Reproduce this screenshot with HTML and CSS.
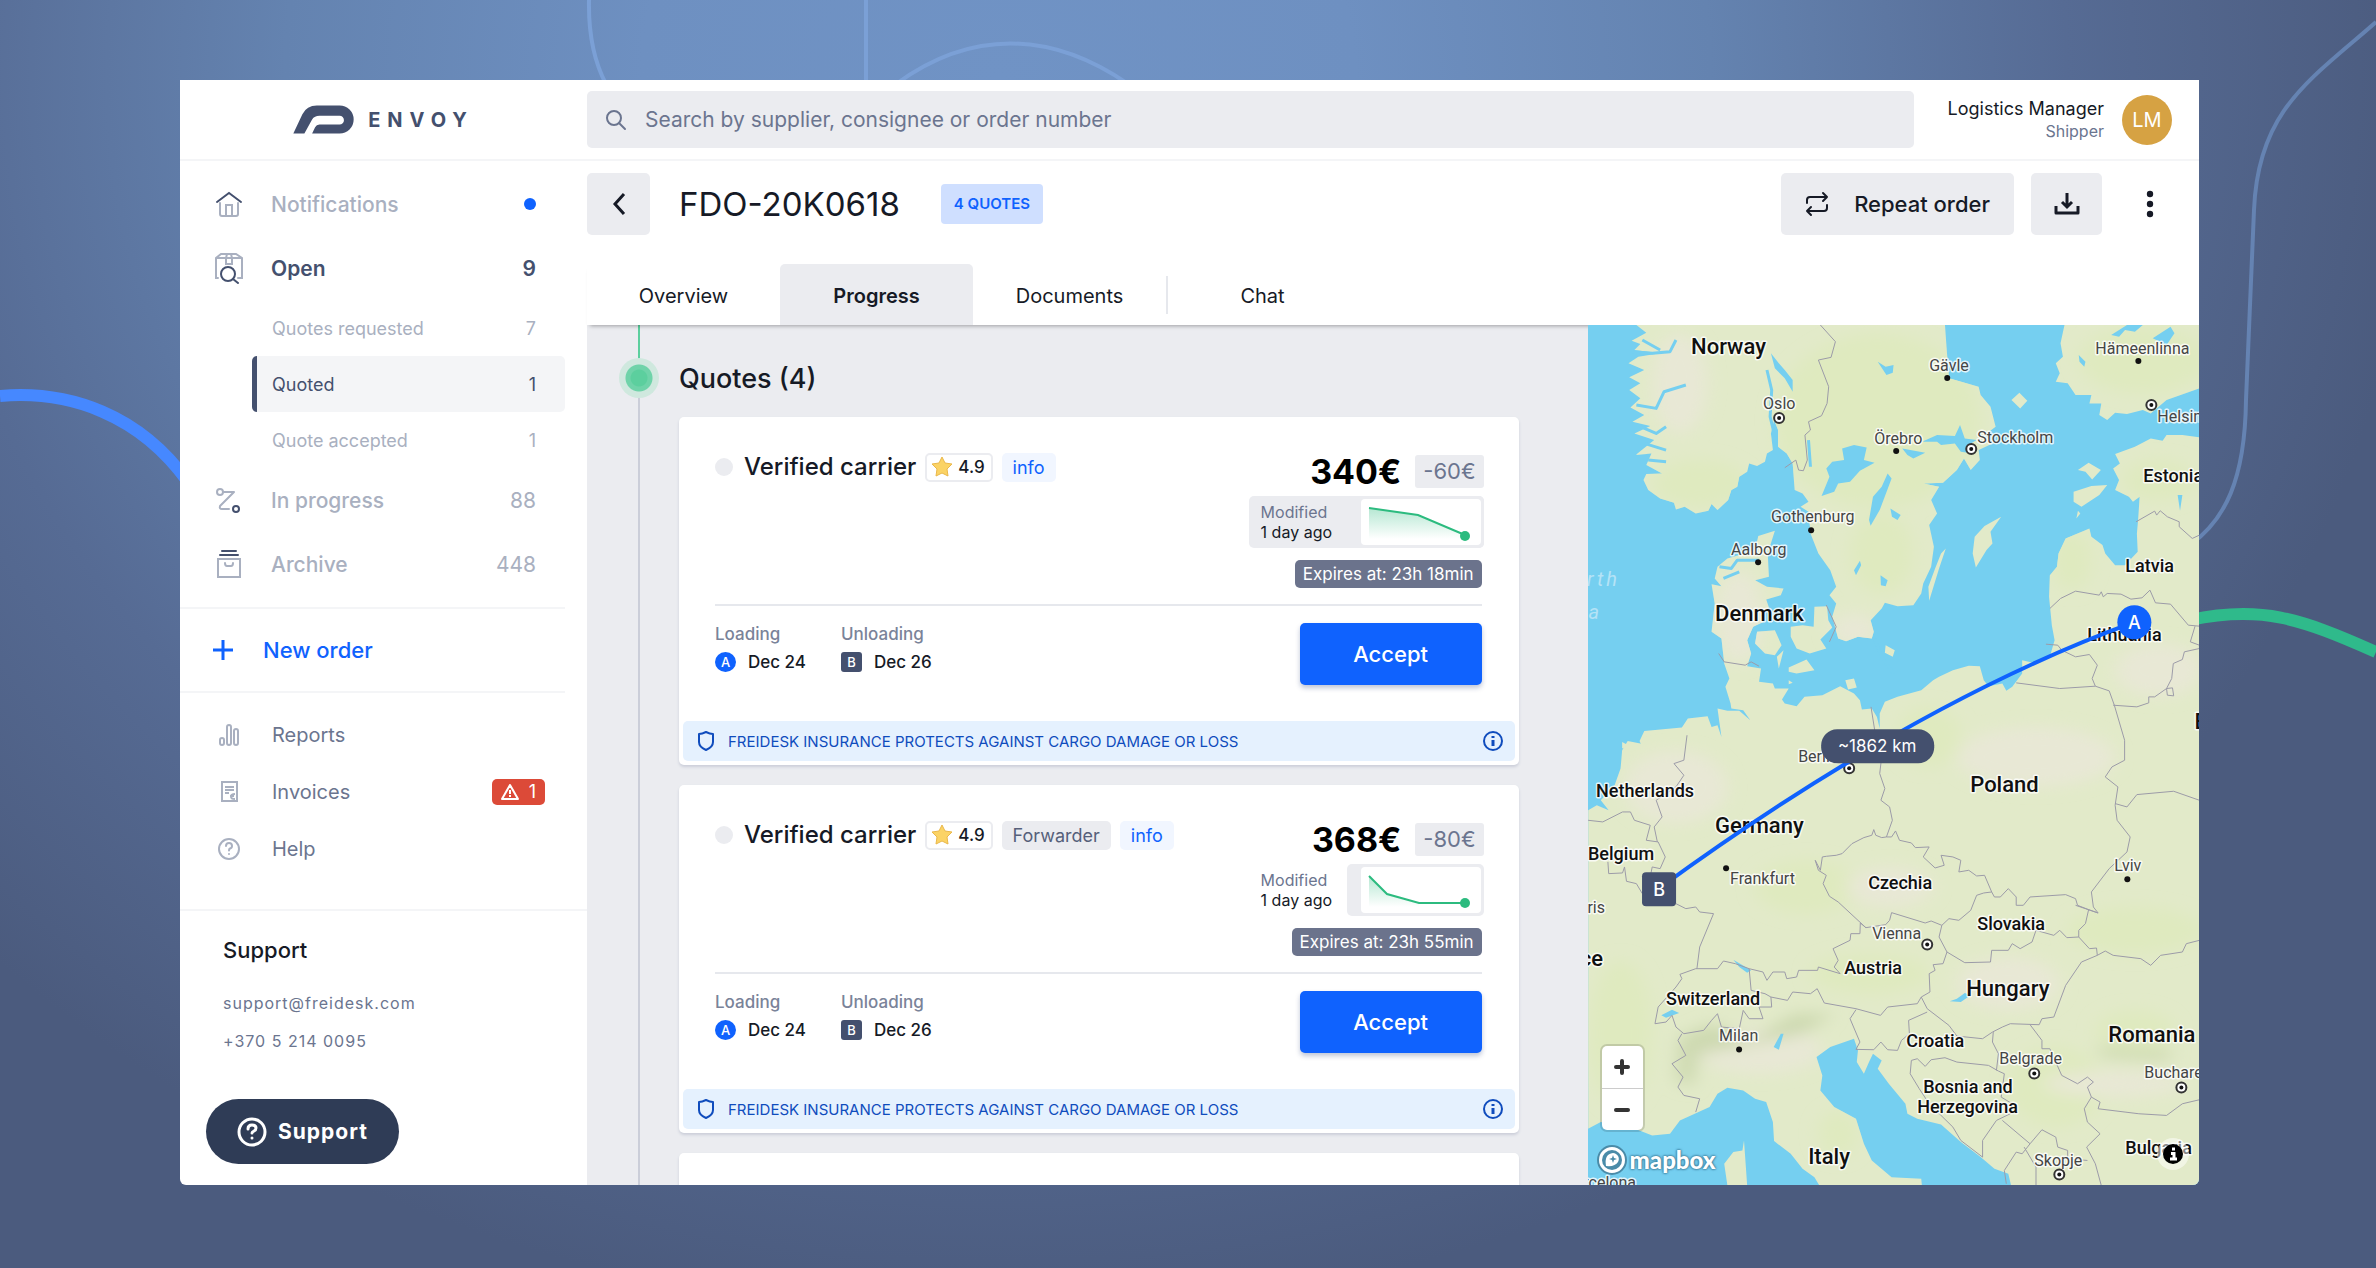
FILE: index.html
```html
<!DOCTYPE html>
<html lang="en">
<head>
<meta charset="utf-8">
<title>Envoy – FDO-20K0618</title>
<meta name="viewport" content="width=device-width, initial-scale=1">
<link rel="stylesheet" href="styles.css">
</head>
<body>
<svg class="backdrop" viewBox="0 0 2376 1268" preserveAspectRatio="xMidYMid slice" fill="none" aria-hidden="true">
  <g stroke="#7ba0d6" stroke-width="4">
    <path d="M589 0Q588 50 606 84M866 0V84M896 84C970 30 1050 30 1128 84"/>
    <path stroke="#6583b2" d="M2376 22C2310 80 2258 110 2254 210L2246 400C2245 480 2225 520 2190 545"/>
  </g>
  <path stroke="#4688ff" stroke-width="12" d="M0 396C70 390 140 415 188 482"/>
  <path stroke="#2fba8b" stroke-width="12" d="M2190 620C2260 605 2300 618 2376 652"/>
</svg>

<div class="app">
  <header class="topbar">
    <a class="brand" href="#">
      <svg width="61" height="29" viewBox="376 103 182 86" aria-hidden="true"><path fill="#44506e" d="M377 188L404 130Q417 104 447 104H515A42 42 0 0 1 515 188H433L442 169Q446 161 455 161H515A13 13 0 0 0 515 135H455Q440 135 433 146L410 188Z"/></svg>
      <span>ENVOY</span>
    </a>
    <label class="search">
      <svg width="22" height="22" viewBox="0 0 22 22" fill="none" stroke="#6b758f" stroke-width="2" stroke-linecap="round" aria-hidden="true"><circle cx="9" cy="9" r="7"/><path d="M14 14l6 6"/></svg>
      <input type="search" placeholder="Search by supplier, consignee or order number" aria-label="Search">
    </label>
    <div class="user">
      <div class="who"><span>Logistics Manager</span><small>Shipper</small></div>
      <div class="avatar">LM</div>
    </div>
  </header>

  <aside class="sidebar">
    <nav class="nav">
      <a class="item" href="#">
        <svg width="28" height="28" viewBox="0 0 28 28" fill="none" stroke="#a9b0c0" stroke-width="2" stroke-linecap="round" aria-hidden="true"><path stroke="#44506e" d="M2 12L14 3l12 9"/><path d="M5 13v11q0 2 2 2h14q2 0 2-2V13M11 26V15h6v11"/></svg>
        <span>Notifications</span><i class="dot"></i></a>
      <a class="item open" href="#">
        <svg width="28" height="32" viewBox="0 0 28 32" fill="none" stroke="#a9b0c0" stroke-width="2" stroke-linecap="round" aria-hidden="true"><path d="M3 26H1V6l5-4h15l6 4v20h-4M1 6h26M12 2l-1 4v6h6V6l-1-4"/><circle stroke="#44506e" cx="13" cy="22" r="7"/><path stroke="#44506e" d="M18 27l5 4"/></svg>
        <span>Open</span><b>9</b></a>
      <a class="sub" href="#"><span>Quotes requested</span><b>7</b></a>
      <a class="sub current" href="#"><span>Quoted</span><b>1</b></a>
      <a class="sub" href="#"><span>Quote accepted</span><b>1</b></a>
      <a class="item" href="#">
        <svg width="28" height="28" viewBox="0 0 28 28" fill="none" stroke="#a9b0c0" stroke-width="2" stroke-linecap="round" stroke-linejoin="round" aria-hidden="true"><circle cx="5" cy="6" r="3"/><path d="M8 6h11L5 20q-1 3 2 3h7"/><circle stroke="#44506e" cx="21" cy="23" r="3"/></svg>
        <span>In progress</span><b>88</b></a>
      <a class="item" href="#">
        <svg width="28" height="30" viewBox="0 0 28 30" fill="none" stroke="#a9b0c0" stroke-width="2" stroke-linecap="round" aria-hidden="true"><path stroke="#44506e" d="M7 2h14M5 6h18"/><path d="M3 10h22v18H3zM10 14q0 3 2 3h4q2 0 2-3"/></svg>
        <span>Archive</span><b>448</b></a>
    </nav>
    <a class="new" href="#">
      <svg width="22" height="22" viewBox="0 0 22 22" stroke="#0f62fe" stroke-width="3" aria-hidden="true"><path d="M1 11h20M11 1v20"/></svg>
      New order</a>
    <nav class="nav tools">
      <a class="tool" href="#">
        <svg width="24" height="24" viewBox="0 0 24 24" fill="none" stroke="#a9b0c0" stroke-width="2" aria-hidden="true"><rect x="3" y="15" width="4" height="7" rx="2"/><rect x="10" y="2" width="4" height="20" rx="2"/><rect x="17" y="6" width="4" height="16" rx="2"/></svg>
        <span>Reports</span></a>
      <a class="tool" href="#">
        <svg width="24" height="24" viewBox="0 0 24 24" fill="none" stroke="#a9b0c0" stroke-width="2" aria-hidden="true"><path d="M5 2h15v19H5zM8 7h9M8 10h9M8 13h4M18 14q-4 0-4 2.500t4 2.500M13 16h4"/></svg>
        <span>Invoices</span>
        <em class="alert"><svg width="18" height="16" viewBox="0 0 18 16" fill="none" stroke="#fff" stroke-width="2" stroke-linejoin="round" aria-hidden="true"><path d="M9 1L17 15H1zM9 6v4M9 11v2"/></svg>1</em></a>
      <a class="tool" href="#">
        <svg width="24" height="24" viewBox="0 0 24 24" fill="none" stroke="#a9b0c0" stroke-width="2" stroke-linecap="round" aria-hidden="true"><circle cx="12" cy="12" r="10"/><path d="M9 9q0-3 3-3t3 3q0 2-2 2.500-1 .5-1 2M12 17v.1"/></svg>
        <span>Help</span></a>
    </nav>
    <section class="contact">
      <h2>Support</h2>
      <a href="mailto:support@freidesk.com">support@freidesk.com</a>
      <a href="tel:+37052140095">+370 5 214 0095</a>
      <button class="support" type="button">
        <svg width="30" height="30" viewBox="0 0 30 30" fill="none" stroke="#fff" stroke-width="3" stroke-linecap="round" aria-hidden="true"><circle cx="15" cy="15" r="13"/><path d="M11 12q0-4 4-4t4 3q0 2-2 3-2 1-2 2M15 21v.1"/></svg>
        Support</button>
    </section>
  </aside>

  <main class="main">
    <div class="titlebar">
      <button class="btn back" type="button" aria-label="Back"><svg width="16" height="24" viewBox="0 0 16 24" fill="none" stroke="#161a26" stroke-width="3" aria-hidden="true"><path d="M13 2L4 12l9 10"/></svg></button>
      <h1>FDO-20K0618</h1>
      <span class="count">4 QUOTES</span>
      <button class="btn repeat" type="button">
        <svg width="24" height="26" viewBox="0 0 24 26" fill="none" stroke="#161a26" stroke-width="2" stroke-linecap="round" stroke-linejoin="round" aria-hidden="true"><path d="M2 12V9q0-3 3-3h17M18 2l4 4-4 4M22 14v3q0 3-3 3H2M6 16l-4 4 4 4"/></svg>
        Repeat order</button>
      <button class="btn download" type="button" aria-label="Download"><svg width="26" height="24" viewBox="0 0 26 24" fill="none" stroke="#161a26" stroke-width="2" aria-hidden="true"><path stroke-width="3" stroke-linejoin="round" d="M2 14v7h22v-7"/><path stroke-width="3" d="M13 1v14M8 10l5 5 5-5"/></svg></button>
      <button class="more" type="button" aria-label="More"><svg width="8" height="28" viewBox="0 0 8 28" fill="#161a26" aria-hidden="true"><circle cx="4" cy="4" r="3.200"/><circle cx="4" cy="14" r="3.200"/><circle cx="4" cy="24" r="3.200"/></svg></button>
    </div>
    <nav class="tabs">
      <a href="#">Overview</a>
      <a class="active" href="#">Progress</a>
      <a href="#">Documents</a>
      <a class="split" href="#">Chat</a>
    </nav>

    <div class="workspace">
      <section class="quotes">
        <div class="rail"><i class="pulse"></i></div>
        <div class="list">
          <h2>Quotes (4)</h2>

          <article class="card">
            <div class="offer">
              <div class="carrier">
                <i class="status"></i><h3>Verified carrier</h3>
                <span class="tag rating"><svg width="22" height="22" viewBox="0 0 22 22" aria-hidden="true"><path fill="#fbd365" stroke="#eab84b" stroke-linejoin="round" d="M11 1l3 6 7 1-5 5 1 7-6-3-6 3 1-7-5-5 7-1z"/></svg>4.9</span>
                <a class="tag info" href="#">info</a>
              </div>
              <div class="pricing">
                <div class="price"><strong>340€</strong><span>-60€</span></div>
                <div class="modified wide"><p><span>Modified</span>1 day ago</p>
                  <div class="chart"><svg width="120" height="46" viewBox="0 0 120 46" aria-hidden="true"><defs><linearGradient id="fade" x1="0" y1="0" x2="0" y2="1"><stop stop-color="#2cbb7f" stop-opacity=".35"/><stop offset="1" stop-color="#2cbb7f" stop-opacity="0"/></linearGradient></defs><path fill="url(#fade)" d="M8 9L57 16 104 36V40H8z"/><path fill="none" stroke="#2cbb7f" stroke-width="2" d="M8 9L57 16 104 36"/><circle cx="104" cy="37" r="5" fill="#2cbb7f"/></svg></div></div>
                <div class="expires">Expires at: 23h 18min</div>
              </div>
            </div>
            <div class="schedule">
              <dl><dt>Loading</dt><dd><i class="pin a">A</i>Dec 24</dd></dl>
              <dl><dt>Unloading</dt><dd><i class="pin b">B</i>Dec 26</dd></dl>
              <button class="accept" type="button">Accept</button>
            </div>
            <div class="insurance">
              <svg width="18" height="20" viewBox="0 0 18 20" fill="none" stroke="#0f4cbd" stroke-width="2" stroke-linejoin="round" aria-hidden="true"><path d="M9 1q4 2 7 2v8q0 5-7 8-7-3-7-8V3q3 0 7-2z"/></svg>
              <span>FREIDESK INSURANCE PROTECTS AGAINST CARGO DAMAGE OR LOSS</span>
              <svg width="22" height="22" viewBox="0 0 22 22" fill="none" stroke="#0f4cbd" stroke-width="2" aria-hidden="true"><circle cx="11" cy="11" r="9"/><path stroke-width="3" d="M11 10v6M11 6v2"/></svg>
            </div>
          </article>

          <article class="card">
            <div class="offer">
              <div class="carrier">
                <i class="status"></i><h3>Verified carrier</h3>
                <span class="tag rating"><svg width="22" height="22" viewBox="0 0 22 22" aria-hidden="true"><path fill="#fbd365" stroke="#eab84b" stroke-linejoin="round" d="M11 1l3 6 7 1-5 5 1 7-6-3-6 3 1-7-5-5 7-1z"/></svg>4.9</span>
                <span class="tag role">Forwarder</span>
                <a class="tag info" href="#">info</a>
              </div>
              <div class="pricing">
                <div class="price"><strong>368€</strong><span>-80€</span></div>
                <div class="modified"><p><span>Modified</span>1 day ago</p>
                  <div class="chart"><svg width="120" height="46" viewBox="0 0 120 46" aria-hidden="true"><path fill="url(#fade)" d="M8 9L26 27 58 36V40H8z"/><path fill="none" stroke="#2cbb7f" stroke-width="2" d="M8 9L26 27 58 36H104"/><circle cx="104" cy="36" r="5" fill="#2cbb7f"/></svg></div></div>
                <div class="expires">Expires at: 23h 55min</div>
              </div>
            </div>
            <div class="schedule">
              <dl><dt>Loading</dt><dd><i class="pin a">A</i>Dec 24</dd></dl>
              <dl><dt>Unloading</dt><dd><i class="pin b">B</i>Dec 26</dd></dl>
              <button class="accept" type="button">Accept</button>
            </div>
            <div class="insurance">
              <svg width="18" height="20" viewBox="0 0 18 20" fill="none" stroke="#0f4cbd" stroke-width="2" stroke-linejoin="round" aria-hidden="true"><path d="M9 1q4 2 7 2v8q0 5-7 8-7-3-7-8V3q3 0 7-2z"/></svg>
              <span>FREIDESK INSURANCE PROTECTS AGAINST CARGO DAMAGE OR LOSS</span>
              <svg width="22" height="22" viewBox="0 0 22 22" fill="none" stroke="#0f4cbd" stroke-width="2" aria-hidden="true"><circle cx="11" cy="11" r="9"/><path stroke-width="3" d="M11 10v6M11 6v2"/></svg>
            </div>
          </article>

          <article class="card"></article>
        </div>
      </section>

      <section class="map" aria-label="Route map">
        <svg class="canvas" viewBox="0 0 611 860" preserveAspectRatio="xMinYMin slice">
          <defs>
            <filter id="soft" x="-50%" y="-50%" width="200%" height="200%"><feGaussianBlur stdDeviation="22"/></filter>
            <clipPath id="land">
              <path d="M140 15L165 38 128 62 150 72 135 90 200 100 145 110 120 130 160 150 122 172 150 190 122 210 150 235 125 262 160 285 130 305 175 318 135 340 185 360 138 405 178 400 165 435 205 460 165 462 158 480 170 510 200 535 235 548 240 568 262 560 290 580 322 572 330 552 345 570 372 540 380 510 395 500 400 470 420 455 425 430 445 438 465 425 470 400 485 390 480 340 488 300 498 330 498 380 520 400 535 430 540 510 560 520 575 545 555 560 575 575 580 640 600 700 630 750 645 800 628 825 645 850 635 890 650 955 670 963 700 950 735 955 740 935 732 900 760 865 768 848 800 858 840 855 860 820 865 790 885 740 892 680 880 615 900 580 885 540 905 500 865 490 915 488 950 450 968 415 985 450 1008 420 1005 390 1040 370 1020 345 1048 320 1035 260 1010 225 1005 200 975 190 930 175 925 100 920 15z"/>
              <path d="M1222 15L1212 70 1218 110 1200 130 1210 160 1200 185 1230 190 1250 225 1290 225 1285 250 1315 250 1310 285 1330 300 1350 278 1380 282 1420 270 1440 280 1480 240 1563 205V15z"/>
              <path d="M1563 352L1520 345 1480 345 1470 362 1440 355 1400 380 1350 402 1362 430 1345 445 1360 480 1350 510 1385 530 1395 545 1412 530 1408 600 1405 640 1407 695 1375 735 1350 735 1325 700 1318 675 1290 650 1285 625 1225 655 1207 700 1203 740 1185 765 1183 830 1190 915 1197 960 1185 1010 1150 1030 1115 1020 1115 1060 1090 1100 1075 1112 1065 1090 1030 1098 1018 1080 1008 1038 980 1037 940 1050 905 1070 890 1080 860 1110 800 1130 768 1145 755 1180 755 1225 748 1190 735 1165 710 1168 705 1140 690 1120 655 1098 610 1125 565 1130 545 1158 515 1150 508 1138 525 1105 490 1105 485 1090 450 1085 455 1045 420 1038 430 1000 420 960 435 920 462 905 455 885 475 862 468 838 505 825 512 805 470 800 440 780 475 770 472 700 490 632 448 648 440 690 400 705 370 715 345 740 338 775 355 798 330 792 338 850 330 935 355 955 362 1030 375 1075 365 1100 378 1150 380 1165 410 1170 428 1200 400 1172 370 1172 345 1165 355 1250 345 1215 330 1220 320 1188 270 1195 255 1222 160 1232 148 1262 158 1290 150 1318 125 1325 130 1350 160 1310 165 1290 150 1270 118 1262 104 1290 100 1345 85 1395 50 1440 70 1470 40 1455 18 1470V2425L50 2405 130 2422 180 2445 225 2440 250 2400 325 2360 345 2320 370 2302 410 2310 440 2335 468 2345 485 2405 488 2462 530 2500 560 2545 590 2570 605 2600H862L860 2575 785 2570 735 2520 715 2470 695 2395 640 2360 605 2310 610 2265 595 2210 630 2180 690 2155 700 2190 697 2225 715 2260 728 2225 738 2200 760 2220 750 2245 778 2290 820 2350 825 2380 850 2395 910 2412 960 2465 1010 2510 1045 2545 1080 2560 1088 2600H1563z"/>
              <path d="M1020 618L1062 590 1035 635 1040 670 1025 690 998 742 990 700 995 650zM922 685L905 745 880 842 878 800 895 745 910 700zM770 975L793 990 788 1010 768 998zM1108 218L1128 242 1110 265 1088 240zM1283 428L1314 450 1292 478 1275 455 1256 450zM1245 515L1290 498 1330 495 1310 525 1265 560 1245 545zM1256 572L1262 580 1252 595zM445 935L490 930 507 975 490 1005 465 1000 440 970zM590 860L622 858 625 900 635 922 605 958 620 985 578 1000 545 985 530 950 530 920 560 915 588 920zM525 1042L570 1018 590 1050 545 1060 525 1055zM668 1080L690 1075 697 1102 675 1108zM525 1080L535 1088 525 1092zM495 1010L512 990 500 1045zM412 2460L420 2595H370L362 2530 385 2495 408 2490zM104 1265L120 1275 104 1285z"/>
            </clipPath>
          </defs>
          <g class="terrain" transform="translate(-7 -5) scale(.3954 .3333)">
            <g clip-path="url(#land)">
              <path fill="#e2eac9" d="M0 0H1600V2620H0z"/>
              <g filter="url(#soft)">
                <g fill="#dfeabf"><ellipse cx="750" cy="300" rx="260" ry="260"/><ellipse cx="300" cy="490" rx="120" ry="70"/><ellipse cx="1420" cy="120" rx="160" ry="100"/><ellipse cx="760" cy="700" rx="80" ry="120"/><ellipse cx="1460" cy="480" rx="90" ry="60"/><ellipse cx="1240" cy="720" rx="50" ry="90"/><ellipse cx="570" cy="1700" rx="130" ry="80"/><ellipse cx="1400" cy="1830" rx="170" ry="70"/><ellipse cx="880" cy="1250" rx="80" ry="90"/><ellipse cx="100" cy="2140" rx="80" ry="220"/><ellipse cx="730" cy="1960" rx="150" ry="60"/><ellipse cx="1200" cy="2300" rx="120" ry="120"/><ellipse cx="1400" cy="2130" rx="100" ry="60"/><ellipse cx="650" cy="2440" rx="50" ry="70"/></g>
                <g fill="#e8e8d5"><ellipse cx="250" cy="190" rx="70" ry="150"/><ellipse cx="400" cy="890" rx="60" ry="140"/><ellipse cx="240" cy="1400" rx="130" ry="110"/><ellipse cx="1150" cy="1310" rx="200" ry="90"/><ellipse cx="450" cy="2190" rx="160" ry="70"/><ellipse cx="1080" cy="1990" rx="130" ry="80"/><ellipse cx="690" cy="930" rx="60" ry="50"/><ellipse cx="1350" cy="2290" rx="180" ry="40"/><ellipse cx="780" cy="1700" rx="110" ry="60"/><ellipse cx="1460" cy="1050" rx="110" ry="80"/></g>
                <g fill="#cdd9b0"><path d="M250 2150L330 2110 430 2160 540 2080 640 2080 560 2140 440 2170 300 2200 280 2300 240 2280z"/><path d="M1300 2180L1500 2190 1480 2220 1320 2210z"/></g>
              </g>
            </g>
            <g fill="#75cff0">
              <path d="M660 385L690 375 722 382 715 420 742 428 705 452 680 485 650 490 640 515 608 528 628 470 620 445 635 425 665 420z"/>
              <path d="M775 460L785 475 755 570 732 617 728 600 738 530 760 500z"/>
              <path d="M862 365L900 345 945 348 958 315 970 355 1000 360 975 378 990 400 960 395 945 370 910 375 900 365zM812 385L870 398 840 415 825 405zM750 125L770 140 790 135 788 158 772 165zM782 565L808 585 800 600 786 590zM705 722L708 735 695 765 690 750zM757 765L775 780 770 798 758 795z"/>
              <path d="M480 100L500 130 515 150 535 180 535 215 515 175 490 145zM1258 105L1275 125 1272 140 1260 125zM1508 525H1520L1514 572zM1340 45L1380 15H1420L1400 35 1375 30 1360 50zM1445 55L1490 20 1500 40 1480 75zM932 2043L950 2035 970 2018 985 2025 960 2045zM505 2140H512L500 2188 487 2180zM385 1918L430 1950 420 1957 400 1940zM203 2085L230 2068 248 2078 215 2092z"/>
            </g>
            <g class="fjords">
              <path d="M130 95L180 100 225 95 240 60M140 255L190 265 210 215 265 195M150 320L190 340 215 320M160 370L215 390M170 420L215 425M470 150L482 210 478 290 490 350M155 60L200 90M350 740L380 745 395 720 450 720M360 775L400 755M575 360L580 440M740 950L760 1010 790 1060"/>
            </g>
            <g class="borders">
              <path d="M605 15L643 65 632 112 600 120 626 200 622 250 608 287 575 305 580 330 566 345 572 420 562 452 550 450 543 420 515 443M348 1000L362 1025 415 1035 430 1025 450 1038M620 855L645 920 628 965M1403 605L1450 573 1455 585 1464 572 1482 590 1512 605 1512 620 1545 655 1563 645M1185 865L1212 835 1250 813 1310 825 1315 815 1320 830 1330 820 1365 822 1390 837 1418 833 1438 810 1452 848 1490 852 1535 915 1563 918M1552 918L1540 965 1563 975V985L1525 995 1520 1018 1497 1030 1493 1075 1480 1105 1450 1130 1435 1130V1148L1405 1160 1345 1155M1480 1105L1495 1103 1498 1127 1482 1125z"/>
              <path d="M1175 972L1205 975 1215 990 1250 1010 1285 1003 1305 1035 1292 1075 1300 1098 1335 1112 1348 1155 1374 1260V1320L1342 1340 1325 1370 1357 1400 1350 1455 1355 1500 1388 1550 1380 1595 1335 1645 1290 1715 1295 1760 1307 1778 1250 1755M1100 1088L1210 1105 1300 1098M1350 1450L1380 1460 1405 1423 1498 1413 1563 1440M733 1160L745 1250 758 1330 755 1360 768 1405 758 1440 780 1460 787 1500 772 1550"/>
              <path d="M772 1550L760 1552 745 1545 740 1528 735 1545 715 1552 685 1570 660 1600 645 1605 620 1608 610 1610 605 1650 592 1620 600 1650 620 1665 612 1690 628 1728 650 1745 720 1822 770 1813 780 1800 785 1777 870 1808 885 1802 912 1815 930 1795 955 1800 985 1770 1000 1725 1018 1718 1038 1715 1020 1665 1000 1667 980 1650 955 1655 960 1620 940 1610 910 1605 918 1635 895 1643 865 1610 880 1580 845 1582 835 1568 805 1560 795 1532 785 1550z"/>
              <path d="M1038 1715L1045 1730 1060 1730 1080 1705 1100 1730V1755H1118L1135 1730 1225 1723 1250 1735 1255 1755 1283 1768 1275 1810 1258 1830 1258 1850 1228 1852 1210 1830 1195 1845 1150 1830 1140 1865 1110 1885 1090 1870 1080 1890 1038 1890 1035 1925 970 1927 925 1895 905 1850 912 1815M1283 1768L1307 1778M1258 1850L1285 1885 1303 1883 1305 1905 1325 1892 1345 1905 1415 1915 1440 1935 1465 1905 1520 1895 1530 1870 1563 1860"/>
              <path d="M1305 1905L1265 1925 1225 1995 1195 2090 1165 2095 1158 2113 1085 2110 1065 2120 1040 2135 1015 2155 950 2147 930 2115 875 2065 860 2030M925 1895L915 1930 890 1933 895 1950 880 1960 882 2015 860 2030 850 2050 775 2060 757 2085 695 2065 615 2048 597 2005 580 2020 535 2015 522 2040 480 2030M720 1822L706 1808 705 1840 682 1840 680 1860 637 1885 650 1920 640 1940 655 1960 600 1940 598 1950 550 1950 545 1970 520 1975 515 1955 485 1955 470 1980 460 1955 425 1945M425 1945L390 1930 360 1922 345 1945 290 1945 250 1962 255 1975 240 2000 195 2060 187 2110 215 2105 230 2085 240 2120 260 2140 310 2130 330 2100 345 2080 355 2120 400 2125 410 2070 425 2095 460 2095 450 2060 482 2060 480 2030 465 2020 430 2010z"/>
              <path d="M240 1750L265 1765 290 1760 300 1775 335 1780 300 1880 293 1945M68 1625L70 1660 105 1658 110 1640 115 1683 140 1690 155 1720M18 1500L55 1505 105 1475 125 1475 135 1500 175 1515 165 1560 195 1565 213 1610 200 1645 180 1640 175 1670M268 1245L260 1320 235 1330 260 1365 240 1400 190 1440 205 1490 185 1520 193 1565M255 2140L245 2160 265 2205 230 2230 258 2270 245 2300 260 2325 300 2335 290 2375"/>
              <path d="M695 2068L680 2095 705 2165 695 2187 740 2188 758 2165 775 2188 800 2190 810 2160 830 2140 828 2100 875 2075M835 2220L850 2215 870 2238 885 2218 920 2212 950 2225 1030 2235 1055 2252 1070 2260 1062 2330 1090 2350 1085 2380 1050 2400 1015 2460 1015 2510 960 2460 940 2420 880 2350 855 2305 832 2260 835 2220M1042 2135L1040 2165 1055 2200 1050 2250M1135 2113L1165 2160V2185H1185L1215 2265 1255 2290 1280 2270 1295 2285 1280 2300 1290 2330 1312 2345 1307 2365 1410 2380 1480 2385 1520 2350 1563 2338M1290 2330L1272 2365 1280 2405 1312 2440 1278 2480 1300 2530 1315 2595M1065 2400L1135 2470 1165 2428 1200 2450 1205 2480 1230 2490V2515L1280 2520M1135 2470L1115 2500 1100 2495 1070 2550 1075 2590M1120 2480L1150 2540V2595"/>
            </g>
          </g>
          <g class="sea"><text x="32" y="261" text-anchor="end">North</text><text x="14" y="294" text-anchor="end">Sea</text></g>
          <g class="big">
            <text x="103" y="29">Norway</text><text x="127" y="296">Denmark</text><text x="382" y="467">Poland</text><text x="127" y="508">Germany</text><text x="378" y="671">Hungary</text><text x="520" y="717">Romania</text><text x="220" y="838">Italy</text><text x="606" y="404">Belarus</text><text x="15" y="641" text-anchor="end">France</text>
          </g>
          <g class="small">
            <text x="555" y="157">Estonia</text><text x="537" y="247">Latvia</text><text x="499" y="316">Lithuania</text><text x="8" y="472">Netherlands</text><text x="0" y="535">Belgium</text><text x="280" y="564">Czechia</text><text x="389" y="605">Slovakia</text><text x="256" y="649">Austria</text><text x="78" y="680">Switzerland</text><text x="318" y="722">Croatia</text><text x="335" y="768">Bosnia and</text><text x="329" y="787">Herzegovina</text><text x="537" y="828">Bulgaria</text>
          </g>
          <g class="city">
            <text x="175" y="84">Oslo</text><text x="341" y="46">Gävle</text><text x="507" y="29">Hämeenlinna</text><text x="569" y="97">Helsinki</text><text x="286" y="119">Örebro</text><text x="389" y="118">Stockholm</text><text x="183" y="197">Gothenburg</text><text x="143" y="230">Aalborg</text><text x="210" y="437">Berlin</text><text x="142" y="559">Frankfurt</text><text x="526" y="546">Lviv</text><text x="284" y="614">Vienna</text><text x="17" y="588" text-anchor="end">Paris</text><text x="131" y="716">Milan</text><text x="411" y="739">Belgrade</text><text x="556" y="753">Bucharest</text><text x="446" y="840">Skopje</text><text x="48" y="862" text-anchor="end">Barcelona</text>
          </g>
          <g class="towns"><circle cx="359" cy="53" r="3"/><circle cx="550" cy="36" r="3"/><circle cx="308" cy="126" r="3"/><circle cx="223" cy="205" r="3"/><circle cx="170" cy="237" r="3"/><circle cx="138" cy="543" r="3"/><circle cx="539" cy="554" r="3"/><circle cx="151" cy="724" r="3"/></g>
          <g class="capitals"><circle cx="191" cy="93" r="5"/><circle cx="563" cy="80" r="5"/><circle cx="383" cy="124" r="5"/><circle cx="261" cy="443" r="5"/><circle cx="339" cy="619" r="5"/><circle cx="446" cy="748" r="5"/><circle cx="593" cy="762" r="5"/><circle cx="471" cy="849" r="5"/></g>
          <g class="towns"><circle cx="191" cy="93" r="2"/><circle cx="563" cy="80" r="2"/><circle cx="383" cy="124" r="2"/><circle cx="261" cy="443" r="2"/><circle cx="339" cy="619" r="2"/><circle cx="446" cy="748" r="2"/><circle cx="593" cy="762" r="2"/><circle cx="471" cy="849" r="2"/></g>
          <path class="route" d="M71 563Q328 376 546 297"/>
          <g class="marks">
            <rect x="233" y="404" width="113" height="34" rx="16" fill="#44506e"/><text class="km" x="289" y="427">~1862 km</text>
            <circle cx="546" cy="297" r="17" fill="#0f62fe"/><text x="546" y="304">A</text>
            <rect x="54" y="547" width="34" height="34" rx="4" fill="#44506e"/><text x="71" y="571">B</text>
          </g>
        </svg>
        <div class="zoom">
          <button type="button" aria-label="Zoom in"><svg width="18" height="18" viewBox="0 0 18 18" stroke="#333" stroke-width="4" stroke-linecap="round" aria-hidden="true"><path d="M3 9h12M9 3v12"/></svg></button>
          <button type="button" aria-label="Zoom out"><svg width="18" height="18" viewBox="0 0 18 18" stroke="#333" stroke-width="4" stroke-linecap="round" aria-hidden="true"><path d="M3 9h12"/></svg></button>
        </div>
        <a class="mapbox" href="#"><svg width="30" height="30" viewBox="0 0 30 30" aria-hidden="true"><circle cx="15" cy="15" r="14" fill="#fff" stroke="#4a8ba8" stroke-width="2"/><circle cx="15" cy="15" r="10" fill="#4a8ba8"/><path fill="#fff" d="M9 21q-2-12 7-13a6 6 0 0 1 5 9q-3 5-12 4z"/><path fill="#4a8ba8" d="M16 10l1 3 3 1-3 1-1 3-1-3-3-1 3-1z"/></svg><span>mapbox</span></a>
        <button class="credits" type="button" aria-label="Map credits"><svg width="20" height="20" viewBox="0 0 20 20" aria-hidden="true"><circle cx="10" cy="10" r="10"/><path stroke="#fff" stroke-width="3" fill="none" d="M8 9.500h3V15M7 15h7M9 5h3"/></svg></button>
      </section>
    </div>
  </main>
</div>
</body>
</html>
```
FILE: styles.css
```css
* { box-sizing: border-box; }

body {
  margin: 0;
  min-height: 100vh;
  padding: 80px 177px 83px 180px;
  font-family: Inter, "Liberation Sans", sans-serif;
  font-size: 20px;
  color: #161a26;
  background: radial-gradient(ellipse 60% 98% at 42% 6%, #7093c5 0%, #6e90c1 25%, #6483b0 50%, #566b94 75%, #4b5b7e 100%);
}

h1, h2, h3, p, dl, dd { margin: 0; font-weight: 500; }
a { color: inherit; text-decoration: none; }
i, em { font-style: normal; }
button { font: inherit; color: inherit; border: 0; padding: 0; cursor: pointer; }
svg { flex: none; display: block; }

.backdrop { position: absolute; inset: 0; width: 100%; height: 100%; z-index: -1; }

.app {
  display: grid;
  grid-template: auto minmax(0, 1fr) / 407px minmax(0, 1fr);
  height: calc(100vh - 163px);
  overflow: hidden;
  background: #fff;
  border-radius: 0 0 6px 6px;
}

/* top bar */
.topbar {
  grid-column: 1 / -1;
  display: grid;
  grid-template-columns: 407px minmax(0, 1fr) auto;
  align-items: center;
  height: 81px;
  border-bottom: 2px solid #f4f5f7;
}
.brand { display: flex; align-items: center; justify-content: center; gap: 14px; color: #44506e; }
.brand span { font-weight: 700; font-size: 20px; letter-spacing: 7px; }
.search { display: flex; align-items: center; gap: 16px; height: 57px; padding: 0 18px; border-radius: 5px; background: #ebecf0; font-size: 21px; }
.search input { flex: 1; border: 0; outline: 0; background: none; font: inherit; color: #161a26; }
.search input::placeholder { color: #6b758f; opacity: 1; }
.user { display: flex; align-items: center; gap: 18px; padding: 0 27px 0 34px; }
.who { display: grid; text-align: right; font-size: 18px; line-height: 22px; }
.who small { font-size: 16px; color: #6b758f; }
.avatar { display: grid; place-items: center; width: 50px; height: 50px; border-radius: 50%; background: #d6a243; color: #fff; }

/* sidebar */
.nav { display: grid; margin-right: 22px; padding: 11px 0; border-bottom: 2px solid #f4f5f7; color: #a9b0c0; }
.item { display: flex; align-items: center; gap: 28px; height: 64px; padding: 0 29px 0 35px; font-size: 21px; font-weight: 500; }
.item svg { width: 28px; }
.item b, .sub b { margin-left: auto; font-weight: 400; }
.item.open, .item.open b { color: #44506e; font-weight: 600; }
.dot { width: 12px; height: 12px; margin-left: auto; border-radius: 50%; background: #0f62fe; }
.sub { display: flex; align-items: center; height: 56px; margin-left: 72px; padding: 0 29px 0 15px; border-left: 5px solid transparent; border-radius: 5px; font-size: 18px; }
.sub.current { background: #f4f5f7; border-color: #44506e; color: #44506e; }
.new { display: flex; align-items: center; gap: 29px; height: 84px; margin-right: 22px; padding-left: 32px; border-bottom: 2px solid #f4f5f7; font-size: 22px; font-weight: 500; color: #0f62fe; }
.tools { margin-right: 0; padding: 13px 22px 32px 0; color: #6b758f; }
.tool { display: flex; align-items: center; gap: 31px; height: 57px; padding: 0 20px 0 37px; }
.alert { display: flex; align-items: center; gap: 10px; height: 26px; margin-left: auto; padding: 0 9px; border-radius: 5px; background: #dc4a38; color: #fff; font-size: 18px; }
.contact { display: grid; justify-items: start; gap: 14px; padding: 24px 43px 0; font-size: 16px; line-height: 24px; color: #6b758f; }
.contact h2 { margin-bottom: 12px; font-size: 22px; line-height: 30px; color: #161a26; }
.contact a { letter-spacing: 1px; }
.support { display: flex; align-items: center; gap: 11px; height: 65px; margin: 32px 0 0 -17px; padding: 0 31px; border-radius: 33px; background: #2f3c56; color: #fff; font-size: 21px; font-weight: 700; letter-spacing: 1px; }

/* order header */
.main { display: flex; flex-direction: column; min-width: 0; }
.titlebar { display: flex; align-items: center; padding: 12px 45px 0 0; }
.btn { display: flex; align-items: center; justify-content: center; height: 62px; border-radius: 5px; background: #ebecf0; }
.back { width: 63px; }
.titlebar h1 { margin: 0 41px 0 29px; font-size: 33px; font-weight: 400; }
.count { padding: 0 13px; border-radius: 4px; background: #cfdfff; color: #0f62fe; font-size: 15px; font-weight: 600; line-height: 40px; }
.repeat { gap: 25px; margin-left: auto; padding: 0 24px; font-size: 22px; font-weight: 500; }
.download { width: 71px; margin: 0 44px 0 17px; }
.more { background: none; }
.tabs { display: flex; align-items: center; margin-top: 29px; position: relative; box-shadow: 0 4px 4px -3px #0005; }
.tabs a { width: 193px; padding-top: 3px; border-radius: 5px 5px 0 0; text-align: center; line-height: 58px; }
.tabs .active { background: #ebecf0; font-weight: 600; }
.tabs .split { border-radius: 0; background: linear-gradient(#e6e8ed, #e6e8ed) left / 2px 38px no-repeat; }
.workspace { flex: 1; display: grid; grid-template-columns: minmax(0, 1000fr) minmax(0, 611fr); min-height: 0; }

/* quotes */
.quotes { display: flex; overflow: hidden; padding-right: 69px; background: #ebecf0; }
.rail { flex: none; width: 92px; padding: 33px 0 0 32px; background: linear-gradient(#5ccf9e, #5ccf9e) 51px 0 / 2px 42px no-repeat, linear-gradient(#cbced9, #cbced9) 51px 0 / 2px 100% no-repeat; }
.pulse { display: block; width: 40px; height: 40px; border-radius: 50%; background: radial-gradient(circle, #5ccf9e 8px, #6fd3a9 9px 13px, #cfe8de 14px); }
.list { flex: 1; min-width: 0; display: grid; grid-auto-rows: max-content; align-content: start; gap: 20px; }
.list h2 { padding-top: 36px; font-size: 27px; line-height: 36px; }
.card { min-height: 120px; padding: 4px; border-radius: 5px; background: #fff; box-shadow: 0 2px 3px #cbced9; }
.offer { display: flex; justify-content: space-between; margin: 0 33px 0 32px; padding: 28px 0 16px; border-bottom: 2px solid #e6e8ed; }
.carrier { display: flex; align-items: center; align-self: flex-start; gap: 9px; height: 36px; }
.status { width: 18px; height: 18px; margin-right: 2px; border-radius: 50%; background: #ebecf0; }
.carrier h3 { font-size: 24px; line-height: 36px; }
.tag { display: flex; align-items: center; height: 29px; padding: 0 11px; border-radius: 5px; font-size: 18px; }
.rating { gap: 5px; padding: 0 6px 0 4px; border: 2px solid #ebecf0; font-size: 17px; font-weight: 500; }
.role { background: #ebecf0; color: #56607a; }
.info { background: #f1f6ff; color: #0f62fe; }
.pricing { display: grid; justify-items: end; }
.price { display: flex; align-items: center; gap: 14px; height: 44px; margin-right: -2px; }
.price strong { font-size: 34px; font-weight: 700; color: #000; }
.price span { padding: 0 8px; border-radius: 3px; background: #ebecf0; color: #6b758f; font-size: 22px; line-height: 33px; }
.modified { display: flex; margin: 3px -2px 0 0; }
.modified p { width: 86px; font-size: 16px; font-weight: 400; line-height: 20px; padding: 6px 0; white-space: nowrap; }
.modified span { display: block; color: #6b758f; }
.modified .chart { padding: 3px 3px 3px 14px; border-radius: 5px; background: #ebecf0; }
.modified.wide { padding-left: 12px; border-radius: 5px; background: #ebecf0; }
.chart svg { border-radius: 4px; background: #fff; }
.expires { margin-top: 12px; padding: 0 8px; border-radius: 5px; background: #6b738c; color: #fff; font-size: 17px; line-height: 28px; }
.schedule { display: flex; gap: 35px; margin: 0 33px 0 32px; padding: 17px 0 36px; }
.schedule dl { min-width: 90px; font-size: 17px; line-height: 28px; padding: 0 0 6px; }
.schedule dt { line-height: 22px; color: #7a8399; }
.schedule dd { display: flex; align-items: center; gap: 12px; margin-top: 3px; }
.pin { display: grid; place-items: center; width: 21px; height: 20px; background: #44506e; color: #fff; border-radius: 3px; font-size: 13px; line-height: 20px; }
.pin.a { border-radius: 50%; background: #0f62fe; }
.accept { width: 182px; height: 62px; margin-left: auto; border-radius: 5px; background: #0f62fe; color: #fff; font-size: 22px; font-weight: 500; box-shadow: 0 3px 5px #0f2a6a44; }
.insurance { display: flex; align-items: center; gap: 13px; height: 40px; padding: 0 11px 0 14px; border-radius: 5px; background: #e5f1fe; color: #0f4cbd; font-size: 15px; font-weight: 400; }
.insurance span { flex: 1; }

/* map */
.map { position: relative; overflow: hidden; background: #75cff0; }
.canvas { width: 100%; height: 100%; }
.fjords, .borders { fill: none; stroke-linejoin: round; }
.fjords path { stroke: #75cff0; stroke-width: 3; vector-effect: non-scaling-stroke; }
.borders path { stroke: #9c9ba8; stroke-width: 1; vector-effect: non-scaling-stroke; }
.canvas text { font-family: Roboto, "Liberation Sans", sans-serif; paint-order: stroke; }
.big, .small, .city { stroke: #ffffffcc; stroke-width: 3; stroke-linejoin: round; fill: #101010; }
.big { font-size: 22px; font-weight: 500; }
.small { font-size: 18px; font-weight: 500; }
.city { font-size: 16px; fill: #454545; }
.sea { font-size: 20px; font-style: italic; letter-spacing: 3px; fill: #b5e3f6; }
.towns { fill: #111; }
.capitals { fill: #fff; stroke: #333; stroke-width: 2; }
.route { fill: none; stroke: #0f62fe; stroke-width: 4; }
.canvas .marks text { fill: #fff; font-family: Inter, sans-serif; font-size: 18px; font-weight: 500; text-anchor: middle; }
.canvas .marks .km { font-size: 17px; font-weight: 400; }
.zoom { position: absolute; left: 14px; bottom: 55px; display: grid; width: 41px; border-radius: 5px; overflow: hidden; background: #fff; box-shadow: 0 0 0 2px #0002; }
.zoom button { display: grid; place-items: center; height: 42px; background: none; }
.zoom button + button { border-top: 1px solid #ccc; }
.mapbox { position: absolute; left: 9px; bottom: 10px; display: flex; align-items: center; gap: 3px; font-family: Lato, sans-serif; font-size: 24px; font-weight: 900; line-height: 30px; color: #fff; text-shadow: 0 0 2px #3e7f9c, 0 0 2px #3e7f9c, 0 0 3px #3e7f9c; }
.credits { position: absolute; right: 10px; bottom: 15px; display: grid; place-items: center; width: 32px; height: 32px; border-radius: 50%; background: #ffffff80; }
```
